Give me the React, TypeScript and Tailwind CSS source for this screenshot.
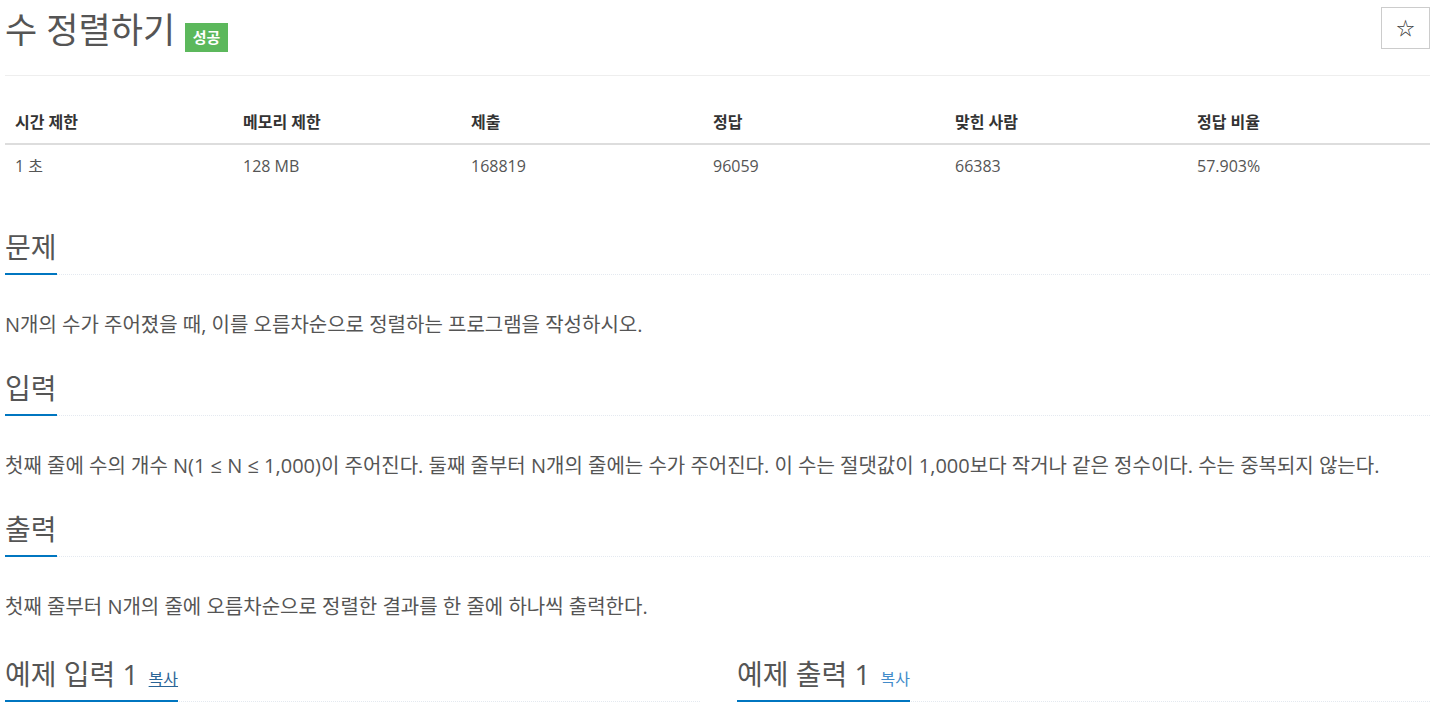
import React from "react";

const font = { fontFamily: '"Open Sans", "Noto Sans CJK KR", sans-serif' };

function Heading({ children }: { children: React.ReactNode }) {
  return (
    <div className="flex border-b border-dotted border-[#e4e9f0]">
      <span className="-mb-px inline-flex items-baseline border-b-2 border-[#0076c0] pb-[11px] text-[28px] leading-[30px] text-[#555]">
        {children}
      </span>
    </div>
  );
}

export default function App() {
  const cols = ["시간 제한", "메모리 제한", "제출", "정답", "맞힌 사람", "정답 비율"];
  const vals = ["1 초", "128 MB", "168819", "96059", "66383", "57.903%"];
  return (
    <div className="w-[1440px] bg-white pl-[5px] pr-[10px] text-[#555]" style={font}>
      <div className="flex h-[76px] items-start justify-between border-b border-[#eee]">
        <div className="mt-[10px] flex items-start">
          <span className="text-[35px] leading-[40px] text-[#555]">수 정렬하기</span>
          <span className="ml-[10px] mt-[13px] flex h-[29px] w-[43px] items-center justify-center bg-[#5cb85c] text-[15px] font-semibold text-white">
            성공
          </span>
        </div>
        <button className="mt-[7px] flex h-[42px] w-[49px] items-center justify-center border border-[#ccc] bg-white text-[18px] text-[#333]">
          ☆
        </button>
      </div>

      <div className="mt-[24px] text-[16px]">
        <div className="grid h-[45px] grid-cols-[228px_228px_242px_242px_242px_243px] items-center border-b-2 border-[#ddd] font-bold text-[#333]">
          {cols.map((c) => (
            <div key={c} className="px-[10px] leading-[20px]">
              {c}
            </div>
          ))}
        </div>
        <div className="grid h-[42px] grid-cols-[228px_228px_242px_242px_242px_243px] items-center text-[#555]">
          {vals.map((c) => (
            <div key={c} className="px-[10px] leading-[20px]">
              {c}
            </div>
          ))}
        </div>
      </div>

      <div className="mt-[45px]">
        <Heading>문제</Heading>
        <p className="mt-[36px] text-[20px] leading-[27px]">
          N개의 수가 주어졌을 때, 이를 오름차순으로 정렬하는 프로그램을 작성하시오.
        </p>
      </div>

      <div className="mt-[35px]">
        <Heading>입력</Heading>
        <p className="mt-[36px] text-[20px] leading-[27px]">
          첫째 줄에 수의 개수 N(1 ≤ N ≤ 1,000)이 주어진다. 둘째 줄부터 N개의 줄에는 수가 주어진다. 이 수는 절댓값이 1,000보다 작거나 같은 정수이다. 수는 중복되지 않는다.
        </p>
      </div>

      <div className="mt-[35px]">
        <Heading>출력</Heading>
        <p className="mt-[36px] text-[20px] leading-[27px]">
          첫째 줄부터 N개의 줄에 오름차순으로 정렬한 결과를 한 줄에 하나씩 출력한다.
        </p>
      </div>

      <div className="mt-[39px] grid grid-cols-[695px_693px] gap-[37px]">
        <div>
          <Heading>
            예제 입력 1
            <a className="ml-[10px] text-[16px] leading-[16px] text-[#2a6496] underline">복사</a>
          </Heading>
        </div>
        <div>
          <Heading>
            예제 출력 1
            <a className="ml-[10px] text-[16px] leading-[16px] text-[#428bca]">복사</a>
          </Heading>
        </div>
      </div>
      <div className="h-[40px]" />
    </div>
  );
}
